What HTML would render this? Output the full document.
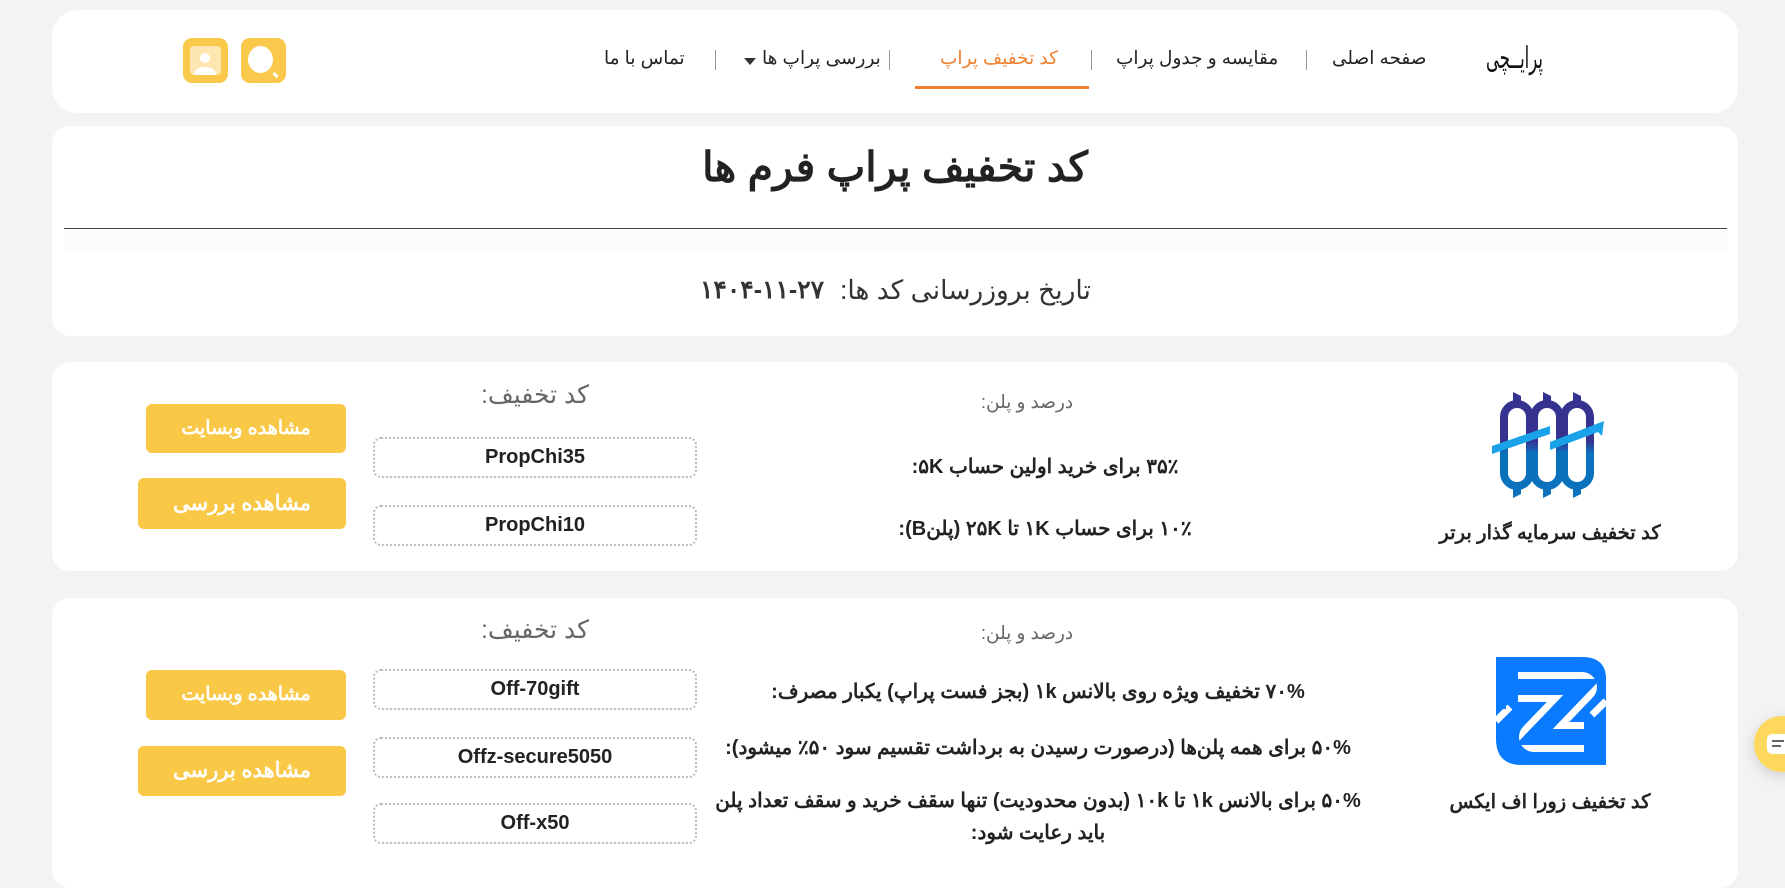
<!DOCTYPE html>
<html><head><meta charset="utf-8"><style>
*{margin:0;padding:0;box-sizing:border-box}
body{width:1785px;height:867px;overflow:hidden;background:#f3f3f3;font-family:"Liberation Sans","Noto Sans CJK SC",sans-serif;color:#333;position:relative}
.card{position:absolute;left:52px;width:1686px;background:#fff;border-radius:18px}
.a{position:absolute;white-space:nowrap}
.c{transform:translateX(-50%);text-align:center}
.nav{font-size:18.5px;color:#222;top:47px}
.sep{position:absolute;top:50px;width:1px;height:20px;background:#999}
.box{position:absolute;left:373px;width:324px;height:41px;border:2px dotted #bbb;border-radius:8px;font-weight:bold;font-size:20px;text-align:center;line-height:37px;color:#222}
.btn{position:absolute;background:#f9c846;border-radius:6px;color:#fff;font-weight:bold;text-align:center}
.gray{color:#666;font-size:18.5px}
.g2{color:#666;font-size:25px}
.ln{font-weight:bold;font-size:20px;color:#222}
</style></head><body>
<div class="card" style="top:10px;height:103px;border-radius:26px"></div>
<div class="a" style="left:1486px;top:41px;font-size:30px;color:#111;direction:rtl;transform:scaleX(0.55);transform-origin:left">پرایــچی</div>
<div class="a nav" style="left:1332px;direction:rtl">صفحه اصلی</div>
<div class="sep" style="left:1306px"></div>
<div class="a nav" style="left:1116px;direction:rtl">مقایسه و جدول پراپ</div>
<div class="sep" style="left:1091px"></div>
<div class="a nav" style="left:940px;color:#f07f2e;direction:rtl">کد تخفیف پراپ</div>
<div class="a" style="left:915px;top:86px;width:174px;height:3px;background:#f07f2e"></div>
<div class="sep" style="left:889px"></div>
<div class="a nav" style="left:762px;direction:rtl">بررسی پراپ ها</div>
<div class="a" style="left:744px;top:58px;border:6px solid transparent;border-top:7px solid #333"></div>
<div class="sep" style="left:715px"></div>
<div class="a nav" style="left:604px;direction:rtl">تماس با ما</div>
<div class="a" style="left:183px;top:38px;width:45px;height:45px;background:#fac84a;border-radius:9px"><div style="position:absolute;left:7px;top:8px;width:31px;height:29px;background:#fde6b0;border-radius:4px;overflow:hidden"><div style="position:absolute;left:10px;top:7px;width:10px;height:10px;border-radius:50%;background:#fff"></div><div style="position:absolute;left:4px;top:21px;width:22px;height:14px;border-radius:50% 50% 0 0;background:#fff"></div></div></div>
<div class="a" style="left:241px;top:38px;width:45px;height:45px;background:#fac84a;border-radius:9px"><div style="position:absolute;left:7px;top:8px;width:25px;height:27px;border-radius:50%;background:#fff"></div><div style="position:absolute;left:33px;top:34px;width:3px;height:6px;background:#fff;transform:rotate(-45deg)"></div></div>

<div class="card" style="top:126px;height:210px"></div>
<div class="a c" style="left:895px;top:143px;font-size:41px;font-weight:bold;color:#222;direction:rtl">کد تخفیف پراپ فرم ها</div>
<div class="a" style="left:64px;top:228px;width:1663px;height:1px;background:#444"></div>
<div class="a" style="left:64px;top:229px;width:1663px;height:24px;background:#fdfcfa"></div>
<div class="a" style="left:700px;top:275px;font-size:25px;font-weight:bold;color:#333"><bdo dir="ltr">۱۴۰۴-۱۱-۲۷</bdo></div>
<div class="a" style="left:840px;top:275px;font-size:26.5px;color:#333;direction:rtl">تاریخ بروزرسانی کد ها:</div>

<div class="card" style="top:362px;height:209px"></div>
<svg class="a" style="left:1490px;top:392px" width="125" height="106" viewBox="0 0 125 106">
<defs><linearGradient id="g" x1="0" y1="0" x2="0" y2="1"><stop offset="0.45" stop-color="#35338f"/><stop offset="0.6" stop-color="#0a72bd"/></linearGradient></defs>
<g fill="none" stroke="url(#g)" stroke-width="8"><rect x="14" y="12" width="26" height="82" rx="13"/><rect x="44" y="12" width="26" height="82" rx="13"/><rect x="74" y="12" width="26" height="82" rx="13"/></g>
<g fill="url(#g)"><path d="M23 0 L31 4 V14 H23Z M53 0 L61 4 V14 H53Z M83 0 L91 4 V14 H83Z M23 92 H31 V102 L23 106Z M53 92 H61 V102 L53 106Z M83 92 H91 V102 L83 106Z"/></g>
<path d="M2 54 L60 34 L60 42 L2 62Z M60 50 L114 29 L112 44 L108 40 L60 58Z" fill="#1aa3e8"/>
</svg>
<div class="a c" style="left:1550px;top:521px;font-size:19.5px;font-weight:bold;color:#222;direction:rtl">کد تخفیف سرمایه گذار برتر</div>
<div class="a c gray" style="left:1027px;top:391px;direction:rtl">درصد و پلن:</div>
<div class="a c ln" style="left:1045px;top:454px;direction:rtl">۳۵٪ برای خرید اولین حساب ۵K:</div>
<div class="a c ln" style="left:1045px;top:516px;direction:rtl">۱۰٪ برای حساب ۱K تا ۲۵K (پلنB):</div>
<div class="a c g2" style="left:535px;top:380px;direction:rtl">کد تخفیف:</div>
<div class="box" style="top:437px">PropChi35</div>
<div class="box" style="top:505px">PropChi10</div>
<div class="btn" style="left:146px;top:404px;width:200px;height:49px;line-height:49px;font-size:19px">مشاهده وبسایت</div>
<div class="btn" style="left:138px;top:478px;width:208px;height:51px;line-height:51px;font-size:21px">مشاهده بررسی</div>

<div class="card" style="top:598px;height:290px"></div>
<svg class="a" style="left:1496px;top:657px" width="110" height="108" viewBox="0 0 110 108">
<path d="M2 0 H86 Q110 0 110 22 V108 H26 Q0 108 0 82 V0Z" fill="#0a7aff"/>
<path d="M22 30 H86 L38 80 H88" fill="none" stroke="#fff" stroke-width="30" stroke-linejoin="round"/>
<path d="M22 30 H86 L38 80 H88" fill="none" stroke="#0a7aff" stroke-width="16" stroke-linejoin="miter"/>
<path d="M0 64 L14 50 M110 44 L96 58" stroke="#fff" stroke-width="7"/>
<rect x="0" y="0" width="10" height="52" fill="#0a7aff"/>
<rect x="100" y="58" width="10" height="50" fill="#0a7aff"/>
</svg>
<div class="a c" style="left:1550px;top:790px;font-size:19.5px;font-weight:bold;color:#222;direction:rtl">کد تخفیف زورا اف ایکس</div>
<div class="a c gray" style="left:1027px;top:622px;direction:rtl">درصد و پلن:</div>
<div class="a c ln" style="left:1038px;top:679px;direction:rtl">۷۰% تخفیف ویژه روی بالانس ۱k (بجز فست پراپ) یکبار مصرف:</div>
<div class="a c ln" style="left:1038px;top:735px;direction:rtl">۵۰% برای همه پلن‌ها (درصورت رسیدن به برداشت تقسیم سود ۵۰٪ میشود):</div>
<div class="a c ln" style="left:1038px;top:788px;direction:rtl">۵۰% برای بالانس ۱k تا ۱۰k (بدون محدودیت) تنها سقف خرید و سقف تعداد پلن</div>
<div class="a c ln" style="left:1038px;top:820px;direction:rtl">باید رعایت شود:</div>
<div class="a c g2" style="left:535px;top:615px;direction:rtl">کد تخفیف:</div>
<div class="box" style="top:669px">Off-70gift</div>
<div class="box" style="top:737px">Offz-secure5050</div>
<div class="box" style="top:803px">Off-x50</div>
<div class="btn" style="left:146px;top:670px;width:200px;height:50px;line-height:50px;font-size:19px">مشاهده وبسایت</div>
<div class="btn" style="left:138px;top:746px;width:208px;height:50px;line-height:50px;font-size:21px">مشاهده بررسی</div>

<div class="a" style="left:1754px;top:716px;width:56px;height:56px;border-radius:50%;background:#fdd85d;box-shadow:0 4px 14px rgba(0,0,0,.15)"><div style="position:absolute;left:13px;top:18px;width:30px;height:20px;background:#fff;border-radius:5px"></div><div style="position:absolute;left:18px;top:24px;width:12px;height:2px;background:#666"></div><div style="position:absolute;left:18px;top:29px;width:9px;height:2px;background:#666"></div></div>
</body></html>
